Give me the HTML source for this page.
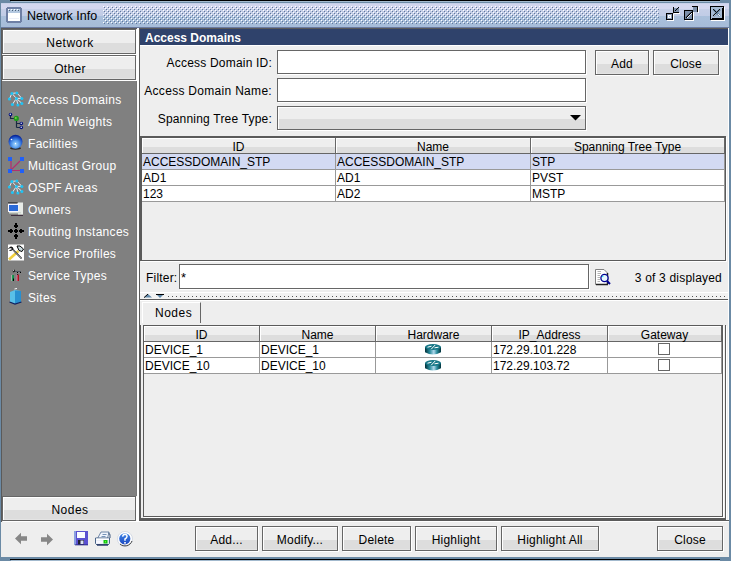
<!DOCTYPE html>
<html><head><meta charset="utf-8">
<style>
*{margin:0;padding:0;box-sizing:border-box}
html,body{width:731px;height:561px;overflow:hidden}
body{position:relative;background:#6b8aa5;font-family:"Liberation Sans",sans-serif;font-size:12px;color:#000}
.a{position:absolute}
.btn{position:absolute;border:1px solid #666;box-shadow:1px 1px 0 #fff,inset 1px 1px 0 #fff;
 background:linear-gradient(#eee 0,#eee 13px,#ddd 13px,#ddd calc(100% - 1px),#e4e4e4 calc(100% - 1px));
 text-align:center;line-height:23px;padding-top:2px;white-space:nowrap;letter-spacing:0.2px}
.tf{position:absolute;border:1px solid #666;box-shadow:1px 1px 0 #fff;background:#fff}
.lbl{position:absolute;white-space:nowrap;letter-spacing:0.2px;line-height:14px}
.nav{position:absolute;left:28px;color:#fff;white-space:nowrap;letter-spacing:0.3px;line-height:14px}
.hc{position:absolute;top:0;height:16px;border-right:1px solid #666;box-shadow:inset 1px 1px 0 #fff;
 background:linear-gradient(#eee 0,#eee 9px,#ddd 9px,#ddd 100%);text-align:center;line-height:15px;padding-top:2px;white-space:nowrap}
.cell{position:absolute;height:16px;border-right:1px solid #999;border-bottom:1px solid #999;white-space:nowrap;line-height:15px;padding-left:1px;padding-top:1px;overflow:hidden}
</style></head><body>
<!-- top strip -->
<div class="a" style="left:10px;top:0;width:710px;height:1px;background:#000"></div>
<div class="a" style="left:11px;top:1px;width:709px;height:1px;background:#a3bace"></div>
<!-- title bar -->
<div class="a" style="left:1px;top:3px;width:728px;height:24px;background:linear-gradient(#bccbe4 0,#d3d7ef 1px,#d3d7ef 6px,#c6cfe8 6px,#c0cce6 13px,#aac0dc 13px,#a6bcd8 24px)"></div>
<div class="a" style="left:1px;top:27px;width:728px;height:1px;background:#6a7aa0"></div>
<!-- title icon -->
<svg class="a" style="left:6px;top:7px" width="16" height="16" viewBox="0 0 16 16" shape-rendering="crispEdges">
 <rect x="0" y="1" width="16" height="14" fill="#6e7fa4"/><rect x="1" y="0" width="14" height="16" fill="#6e7fa4"/>
 <rect x="2" y="2" width="12" height="4" fill="#b4c8e0"/>
 <rect x="2" y="2" width="1" height="1" fill="#fff"/><rect x="5" y="2" width="1" height="1" fill="#fff"/><rect x="8" y="2" width="1" height="1" fill="#fff"/><rect x="11" y="2" width="1" height="1" fill="#fff"/>
 <rect x="3" y="3" width="1" height="1" fill="#48607a"/><rect x="6" y="3" width="1" height="1" fill="#48607a"/><rect x="9" y="3" width="1" height="1" fill="#48607a"/><rect x="12" y="3" width="1" height="1" fill="#48607a"/>
 <rect x="2" y="6" width="12" height="8" fill="#fff"/><rect x="3" y="11" width="10" height="1" fill="#eef0f8"/>
</svg>
<div class="lbl" style="left:27px;top:9px;font-size:12.5px;letter-spacing:0">Network Info</div>
<!-- bumps -->
<svg class="a" style="left:103px;top:6px" width="556" height="18" shape-rendering="crispEdges">
 <defs><pattern id="bp" width="4" height="4" patternUnits="userSpaceOnUse">
  <rect x="0" y="0" width="1" height="1" fill="#fff"/><rect x="2" y="2" width="1" height="1" fill="#fff"/>
  <rect x="1" y="1" width="1" height="1" fill="#60789a"/><rect x="3" y="3" width="1" height="1" fill="#60789a"/>
 </pattern></defs>
 <rect width="556" height="18" fill="url(#bp)"/>
</svg>
<!-- window buttons -->
<svg class="a" style="left:664px;top:4px" width="64" height="20" shape-rendering="crispEdges">
 <!-- iconify -->
 <rect x="2" y="9" width="7" height="7" fill="#000"/><rect x="3" y="10" width="5" height="5" fill="#8a9cb8"/><rect x="4" y="11" width="3" height="3" fill="#fff"/><rect x="5" y="12" width="1" height="1" fill="#b0c0d8"/>
 <rect x="3" y="16" width="7" height="1" fill="#fff"/><rect x="9" y="10" width="1" height="7" fill="#fff"/>
 <rect x="9" y="3" width="1" height="6" fill="#000"/><rect x="9" y="8" width="6" height="1" fill="#000"/><rect x="10" y="4" width="5" height="4" fill="#7d90aa"/>
 <path d="M11 7 L15 3" stroke="#000" stroke-width="1" shape-rendering="auto"/>
 <rect x="10" y="9" width="6" height="1" fill="#fff"/>
 <!-- maximize -->
 <rect x="20" y="6" width="9" height="10" fill="#000"/><rect x="21" y="7" width="7" height="8" fill="#7d90aa"/>
 <path d="M22 14 L28 8" stroke="#000" stroke-width="1.2" shape-rendering="auto"/><path d="M23 14 L28 9" stroke="#e8eef8" stroke-width="1" shape-rendering="auto"/>
 <rect x="21" y="16" width="9" height="1" fill="#fff"/><rect x="29" y="7" width="1" height="10" fill="#fff"/>
 <rect x="28" y="2" width="6" height="1" fill="#000"/><rect x="33" y="2" width="1" height="6" fill="#000"/><rect x="29" y="3" width="4" height="5" fill="#7d90aa"/><rect x="34" y="3" width="1" height="6" fill="#fff"/>
 <!-- close -->
 <rect x="46" y="2" width="14" height="14" fill="#000"/><rect x="47" y="3" width="12" height="12" fill="#a8bcd4"/>
 <rect x="48" y="14" width="11" height="1" fill="#000"/><rect x="58" y="4" width="1" height="11" fill="#000"/>
 <path d="M49.5 5.5 L56 12 M56 5.5 L49.5 12" stroke="#6888a4" stroke-width="2.2" shape-rendering="auto"/>
 <path d="M49 5 L52.5 8.5 M56 5 L49 12" stroke="#101010" stroke-width="1" shape-rendering="auto"/>
 <path d="M51.5 10.5 L50.5 11.5 M54 10 L56 12" stroke="#fff" stroke-width="0.9" shape-rendering="auto"/>
 <rect x="47" y="16" width="14" height="1" fill="#fff"/><rect x="60" y="3" width="1" height="14" fill="#fff"/>
</svg>

<!-- content area background -->
<div class="a" style="left:1px;top:28px;width:728px;height:529px;background:#eee"></div>
<div class="a" style="left:1px;top:28px;width:728px;height:1px;background:#5a5a5a"></div>
<div class="a" style="left:1px;top:28px;width:1px;height:494px;background:#5a5a5a"></div>

<!-- LEFT PANEL -->
<div class="a" style="left:2px;top:81px;width:135px;height:415px;background:#808080"></div>
<div class="a" style="left:136px;top:81px;width:1px;height:415px;background:#777"></div>
<div class="a" style="left:137px;top:28px;width:2px;height:494px;background:#fff"></div>
<div class="btn" style="left:2px;top:29px;width:134px;height:25px;padding-left:2px;letter-spacing:0.5px">Network</div>
<div class="btn" style="left:2px;top:55px;width:134px;height:25px;padding-left:2px;letter-spacing:0.3px">Other</div>
<div class="btn" style="left:2px;top:496px;width:134px;height:25px;padding-left:2px;letter-spacing:0.5px">Nodes</div>

<div id="navlist">
<div class="nav" style="top:93px">Access Domains</div>
<div class="nav" style="top:115px">Admin Weights</div>
<div class="nav" style="top:137px">Facilities</div>
<div class="nav" style="top:159px">Multicast Group</div>
<div class="nav" style="top:181px">OSPF Areas</div>
<div class="nav" style="top:203px">Owners</div>
<div class="nav" style="top:225px">Routing Instances</div>
<div class="nav" style="top:247px">Service Profiles</div>
<div class="nav" style="top:269px">Service Types</div>
<div class="nav" style="top:291px">Sites</div>
</div>


<!-- RIGHT PANEL -->
<div class="a" style="left:139px;top:28px;width:1px;height:494px;background:#5a5a5a"></div>
<div class="a" style="left:728px;top:28px;width:1px;height:494px;background:#fff"></div>
<div class="a" style="left:140px;top:29px;width:588px;height:16px;background:#2f426b"></div>
<div class="a" style="left:140px;top:45px;width:588px;height:1px;background:#fff"></div>
<div class="lbl" style="left:145px;top:31px;color:#fff;font-weight:bold;letter-spacing:0">Access Domains</div>

<div class="lbl" style="right:459px;top:56px">Access Domain ID:</div>
<div class="lbl" style="right:459px;top:84px;letter-spacing:0.3px">Access Domain Name:</div>
<div class="lbl" style="right:459px;top:112px">Spanning Tree Type:</div>
<div class="tf" style="left:277px;top:50px;width:309px;height:24px"></div>
<div class="tf" style="left:277px;top:78px;width:309px;height:24px"></div>
<div class="btn" style="left:277px;top:106px;width:309px;height:24px;background:linear-gradient(#eee 0,#eee 12px,#ddd 12px,#ddd 100%)"></div>
<svg class="a" style="left:570px;top:115px" width="11" height="6"><path d="M0 0 H11 L5.5 5.5 Z" fill="#000"/></svg>
<div class="btn" style="left:595px;top:50px;width:54px;height:25px">Add</div>
<div class="btn" style="left:653px;top:50px;width:66px;height:25px">Close</div>

<!-- top table -->
<div class="a" id="t1" style="left:140px;top:136px;width:586px;height:125px;background:#eee;border-top:2px solid #5a5a5a;border-left:2px solid #5a5a5a;border-right:1px solid #5a5a5a;border-bottom:1px solid #5a5a5a;box-shadow:1px 1px 0 #fff">
 <div class="a" style="left:0;top:0;width:583px;height:16px">
  <div class="hc" style="left:0;width:194px;border-bottom:1px solid #666">ID</div>
  <div class="hc" style="left:194px;width:195px;border-bottom:1px solid #666">Name</div>
  <div class="hc" style="left:389px;width:194px;border-bottom:1px solid #666">Spanning Tree Type</div>
 </div>
 <div class="a" style="left:0;top:16px;width:583px;height:16px;background:#d3daf3"></div>
 <div class="a" style="left:0;top:32px;width:583px;height:32px;background:#fff"></div>
 <div class="cell" style="left:0;top:16px;width:194px">ACCESSDOMAIN_STP</div>
 <div class="cell" style="left:194px;top:16px;width:195px">ACCESSDOMAIN_STP</div>
 <div class="cell" style="left:389px;top:16px;width:194px">STP</div>
 <div class="cell" style="left:0;top:32px;width:194px">AD1</div>
 <div class="cell" style="left:194px;top:32px;width:195px">AD1</div>
 <div class="cell" style="left:389px;top:32px;width:194px">PVST</div>
 <div class="cell" style="left:0;top:48px;width:194px">123</div>
 <div class="cell" style="left:194px;top:48px;width:195px">AD2</div>
 <div class="cell" style="left:389px;top:48px;width:194px">MSTP</div>
</div>

<!-- filter -->
<div class="lbl" style="left:146px;top:271px">Filter:</div>
<div class="tf" style="left:179px;top:264px;width:410px;height:25px"></div>
<div class="lbl" style="left:181px;top:271px;font-size:13px">*</div>

<div class="lbl" style="right:9px;top:271px">3 of 3 displayed</div>

<!-- split divider -->
<div class="a" style="left:140px;top:292px;width:588px;height:1px;background:#fff"></div>
<div class="a" style="left:140px;top:293px;width:588px;height:6px;background:#f2f2f2"></div>
<div class="a" style="left:140px;top:299px;width:588px;height:1px;background:#5a5a5a"></div>
<div class="a" style="left:140px;top:300px;width:588px;height:1px;background:#fff"></div>
<svg class="a" style="left:168px;top:296px" width="560" height="1" shape-rendering="crispEdges">
 <defs><pattern id="dt" width="4" height="1" patternUnits="userSpaceOnUse"><rect width="1" height="1" fill="#555"/></pattern></defs>
 <rect width="560" height="1" fill="url(#dt)"/>
</svg>
<svg class="a" style="left:144px;top:294px" width="20" height="4" shape-rendering="crispEdges">
 <path d="M0 3.6 L4 0 L8 3.6 Z" fill="#5f87a8" shape-rendering="auto"/><path d="M0 3.6 L4 0" stroke="#000" stroke-width="1" shape-rendering="auto"/>
 <path d="M12 0 H20 L16 4 Z" fill="#5f87a8" shape-rendering="auto"/><rect x="12" y="0" width="8" height="1" fill="#000"/>
</svg>

<!-- tabs -->
<div class="a" style="left:142px;top:302px;width:59px;height:21px;border-top:1px solid #fff;border-left:1px solid #fff;border-right:1px solid #666"></div>
<div class="lbl" style="left:155px;top:306px;letter-spacing:0.5px">Nodes</div>
<div class="a" style="left:140px;top:325px;width:586px;height:195px;border-bottom:2px solid #5a5a5a;border-left:1px solid #5a5a5a;border-right:1px solid #5a5a5a;box-shadow:1px 1px 0 #fff"></div>

<!-- nodes table -->
<div class="a" id="t2" style="left:143px;top:325px;width:580px;height:192px;border:1px solid #5a5a5a;box-shadow:1px 1px 0 #fff">
 <div class="a" style="left:0;top:0;width:578px;height:16px">
  <div class="hc" style="left:0;width:116px;border-bottom:1px solid #666">ID</div>
  <div class="hc" style="left:116px;width:116px;border-bottom:1px solid #666">Name</div>
  <div class="hc" style="left:232px;width:116px;border-bottom:1px solid #666">Hardware</div>
  <div class="hc" style="left:348px;width:116px;border-bottom:1px solid #666">IP_Address</div>
  <div class="hc" style="left:464px;width:114px;border-bottom:1px solid #666">Gateway</div>
 </div>
 <div class="a" style="left:0;top:16px;width:578px;height:32px;background:#fff"></div>
 <div class="cell" style="left:0;top:16px;width:116px">DEVICE_1</div>
 <div class="cell" style="left:116px;top:16px;width:116px">DEVICE_1</div>
 <div class="cell" style="left:232px;top:16px;width:116px"></div>
 <div class="cell" style="left:348px;top:16px;width:116px">172.29.101.228</div>
 <div class="cell" style="left:464px;top:16px;width:114px"></div>
 <div class="cell" style="left:0;top:32px;width:116px">DEVICE_10</div>
 <div class="cell" style="left:116px;top:32px;width:116px">DEVICE_10</div>
 <div class="cell" style="left:232px;top:32px;width:116px"></div>
 <div class="cell" style="left:348px;top:32px;width:116px">172.29.103.72</div>
 <div class="cell" style="left:464px;top:32px;width:114px"></div>
</div>

<div class="a" style="left:658px;top:343px;width:12px;height:12px;border:1px solid #666;box-shadow:1px 1px 0 #fff"></div>
<div class="a" style="left:658px;top:359px;width:12px;height:12px;border:1px solid #666;box-shadow:1px 1px 0 #fff"></div>

<!-- bottom toolbar -->
<div class="a" style="left:139px;top:520px;width:590px;height:1px;background:#5a5a5a"></div>
<div class="a" style="left:139px;top:521px;width:590px;height:1px;background:#fff"></div>

<div class="btn" style="left:195px;top:526px;width:63px;height:25px">Add...</div>
<div class="btn" style="left:262px;top:526px;width:76px;height:25px">Modify...</div>
<div class="btn" style="left:342px;top:526px;width:69px;height:25px">Delete</div>
<div class="btn" style="left:415px;top:526px;width:82px;height:25px">Highlight</div>
<div class="btn" style="left:501px;top:526px;width:98px;height:25px">Highlight All</div>
<div class="btn" style="left:657px;top:526px;width:66px;height:25px">Close</div>

<svg class="a" style="left:0;top:0" width="731" height="561" viewBox="0 0 731 561">
<defs>
 <radialGradient id="glob" cx="0.5" cy="0.68" r="0.62"><stop offset="0" stop-color="#a8dcff"/><stop offset="0.5" stop-color="#4a90e8"/><stop offset="0.85" stop-color="#1848c0"/><stop offset="1" stop-color="#0a2898"/></radialGradient>
 <linearGradient id="rtr" x1="0" x2="1" y1="0" y2="0"><stop offset="0" stop-color="#00303a"/><stop offset="0.3" stop-color="#2a8c9c"/><stop offset="0.55" stop-color="#b0d8ec"/><stop offset="0.75" stop-color="#2a8c9c"/><stop offset="1" stop-color="#00303a"/></linearGradient>
 <linearGradient id="hlp" x1="0" x2="0" y1="0" y2="1"><stop offset="0" stop-color="#3f86e8"/><stop offset="1" stop-color="#1c48c0"/></linearGradient>
 <g id="net">
  <path d="M5.5 5 L10.5 4.5 M5.5 5 L3 10.5 M5.5 5 L10 10 M10.5 4.5 L15.5 10 M10 10 L15.5 10 M10 10 L6 16 M10 10 L11.5 16.5 M10 10 L15.5 15" stroke="#e4ecf4" stroke-width="1"/>
  <g fill="#1ec3f5"><circle cx="5.5" cy="5" r="1.5"/><circle cx="10.5" cy="4.5" r="1.5"/><circle cx="3" cy="10.5" r="1.5"/><circle cx="10" cy="10" r="1.5"/><circle cx="15.5" cy="10" r="1.5"/><circle cx="6" cy="16" r="1.5"/><circle cx="11.5" cy="16.5" r="1.5"/><circle cx="15.5" cy="15" r="1.5"/></g>
 </g>
</defs>
<!-- nav icons -->
<use href="#net" x="6.4" y="88.4"/>
<g transform="translate(6,110)">
 <path d="M4.5 4.5 V8.5 H10 M10.5 10 V17.5 M10.5 13.5 H15.3 M10.5 17.5 H15.3" stroke="#1a2a40" stroke-width="1.2" fill="none"/>
 <circle cx="4.5" cy="4.5" r="1.8" fill="#00107a"/><circle cx="4.3" cy="4.3" r="0.7" fill="#fff"/>
 <circle cx="10.3" cy="8.4" r="2.6" fill="#1e9a1e"/><circle cx="9.8" cy="7.9" r="1" fill="#7ad040"/>
 <circle cx="15.3" cy="13.5" r="1.8" fill="#00107a"/><circle cx="15.2" cy="13.3" r="0.7" fill="#fff"/>
 <circle cx="15.3" cy="17.5" r="1.8" fill="#00107a"/><circle cx="15.2" cy="17.3" r="0.7" fill="#fff"/>
</g>
<g transform="translate(6,132)">
 <ellipse cx="9.5" cy="16.3" rx="5.5" ry="1.4" fill="#101010" opacity="0.8"/>
 <circle cx="9.5" cy="9.8" r="7" fill="url(#glob)"/>
 <circle cx="5.5" cy="7.5" r="0.8" fill="#fff"/><circle cx="9.5" cy="11.5" r="0.7" fill="#fff"/>
</g>
<g transform="translate(6,154)">
 <path d="M5 7 V16 L14 7 M5 16.5 H14" stroke="#b03070" stroke-width="1.2" fill="none"/>
 <g fill="#2060f8"><rect x="2" y="3" width="4" height="4"/><rect x="14" y="3" width="4" height="4"/><rect x="2" y="15" width="4" height="4"/><rect x="14" y="15" width="4" height="4"/></g>
</g>
<use href="#net" x="6.4" y="176.4"/>
<g transform="translate(6,198)">
 <rect x="12" y="4.5" width="5" height="12" fill="#e8ece8"/>
 <rect x="2" y="5" width="10.5" height="9" fill="#f4f4ff"/>
 <rect x="2" y="4.5" width="9.5" height="1" fill="#101010"/>
 <rect x="3" y="7" width="9" height="6" fill="#2a6ad8"/>
 <rect x="3" y="14" width="12" height="1.5" fill="#d0d8d0"/>
 <rect x="5" y="17" width="12" height="1" fill="#403040"/>
</g>
<g transform="translate(6,220)" fill="#000" shape-rendering="crispEdges">
 <rect x="8" y="10" width="4" height="2"/><rect x="9" y="9" width="2" height="4"/>
 <rect x="3" y="10" width="4" height="2"/><rect x="4" y="9" width="2" height="4"/><rect x="2" y="10" width="1" height="2"/>
 <rect x="13" y="10" width="4" height="2"/><rect x="14" y="9" width="2" height="4"/><rect x="17" y="10" width="1" height="2"/>
 <rect x="8" y="5" width="4" height="2"/><rect x="9" y="4" width="2" height="4"/><rect x="9" y="3" width="2" height="1"/>
 <rect x="8" y="15" width="4" height="2"/><rect x="9" y="14" width="2" height="4"/><rect x="9" y="18" width="2" height="1"/>
</g>
<g transform="translate(6,242)">
 <rect x="2" y="2.5" width="16" height="16" fill="#fff"/>
 <path d="M3 17.5 L12.5 9" stroke="#f0d040" stroke-width="2.6"/>
 <path d="M4.5 5 L15.5 16.5" stroke="#202020" stroke-width="1.6"/>
 <path d="M5 5.5 L15 16" stroke="#dde4f0" stroke-width="0.6"/>
 <path d="M2.5 6.5 L5 5 L7 6 L6 8 L3.5 8.5" stroke="#000" stroke-width="1" fill="none"/>
 <path d="M11 4 L14 4 L17.5 7 L16 9.5 L13 8.5 Z" fill="#c8d8dc" stroke="#000" stroke-width="1"/>
</g>
<g transform="translate(6,264)">
 <path d="M6 6.5 L8.5 5.5 L9.5 7.5 L7 8.5 Z" fill="#202020"/><path d="M6.5 7 L8 6" stroke="#fff" stroke-width="0.8"/>
 <path d="M9 7.5 H15" stroke="#505860" stroke-width="1"/><rect x="11" y="8" width="1" height="1" fill="#000"/><rect x="14" y="8" width="1" height="1" fill="#000"/>
 <rect x="6" y="11" width="2" height="6" fill="#10904a"/><rect x="7" y="14.5" width="1" height="2.5" fill="#000"/><rect x="5.5" y="11" width="0.6" height="6" fill="#c8e0d0"/>
 <rect x="11" y="10.5" width="2" height="6.5" fill="#b01020"/><rect x="10.6" y="10.5" width="0.9" height="6.5" fill="#e080a0"/><rect x="11" y="10" width="1" height="1" fill="#202020"/>
</g>
<g transform="translate(6,286)">
 <path d="M4 6 L9 4 L15 5 V16 L9 18 L4 16 Z" fill="#58c0e8"/>
 <path d="M9 4.5 L15 5 V16 L9 18 Z" fill="#2890d0"/>
 <path d="M3.5 16 L9 18 L15.5 16" stroke="#102060" stroke-width="1.2" fill="none"/>
 <path d="M8.5 3 L11 2.5" stroke="#fff" stroke-width="1"/>
</g>
<!-- search icon -->
<g transform="translate(595,269)">
 <path d="M0.5 0.5 H9 L12.5 4 V15.5 H0.5 Z" fill="#fff" stroke="#808080" stroke-width="1"/>
 <path d="M1 15.5 H13 M12.5 4 V15" stroke="#202020" stroke-width="1.5"/>
 <path d="M2.5 2.5 H6 M2.5 4.5 H6 M2.5 6.5 H5 M2.5 8.5 H5 M2.5 10.5 H5 M2.5 12.5 H5" stroke="#a0a0a0" stroke-width="0.8"/>
 <circle cx="9.5" cy="9" r="3.6" fill="#e8f8ff" stroke="#000090" stroke-width="1.3"/>
 <path d="M7.5 8 L8 7" stroke="#00e0ff" stroke-width="1.2"/>
 <path d="M12 12 L15 15" stroke="#000090" stroke-width="2"/>
</g>
<!-- routers -->
<g id="rt" transform="translate(425,344)">
 <path d="M0 3 V8.2 Q8 12.8 16 8.2 V3 Z" fill="url(#rtr)"/>
 <ellipse cx="8" cy="3" rx="8" ry="3" fill="#187888"/>
 <path d="M2.5 3.2 L6.5 2.2 M9.5 3.8 L13.5 3.2 M6.2 5.2 L10.2 1" stroke="#fff" stroke-width="1"/>
</g>
<use href="#rt" x="0" y="16"/>
<!-- toolbar -->
<path d="M15 538.5 L21 532.8 V536.3 H27 V540.8 H21 V544.2 Z" fill="#878787"/>
<path d="M53 539.5 L47 533.8 V537.3 H41 V541.8 H47 V545.2 Z" fill="#878787"/>
<g transform="translate(74,531)">
 <rect x="0" y="0" width="14" height="14" fill="#5a50d0"/>
 <rect x="0" y="0" width="2" height="14" fill="#8aa0e0"/>
 <rect x="3" y="1" width="8" height="6" fill="#fafcff"/>
 <rect x="4" y="9" width="6" height="4.5" fill="#202030"/><rect x="6.5" y="9.5" width="3" height="3.5" fill="#d8e0f8"/>
 <rect x="1" y="13.5" width="13" height="0.8" fill="#20207a"/>
</g>
<g transform="translate(95,531)">
 <path d="M2.5 7.5 L6 1 H14 L12.5 7.5 Z" fill="#f0f4fc" stroke="#7088a8" stroke-width="1"/>
 <path d="M13.5 1.5 L15 4 V7" stroke="#5a7090" stroke-width="1.2" fill="none"/>
 <path d="M7.5 3.5 H11.5 M6.5 5.5 H10.5" stroke="#6888b0" stroke-width="0.9"/>
 <path d="M0.5 7 H14.5 V12.5 L13 14 H2 L0.5 12.5 Z" fill="#dfe6f2" stroke="#4a6488" stroke-width="1"/>
 <rect x="1" y="7.5" width="13" height="1.5" fill="#fff"/>
 <rect x="1" y="9.5" width="8" height="3" fill="#f8f8ff"/>
 <rect x="8.5" y="9" width="4" height="3.5" fill="#10c810"/><rect x="10" y="10.3" width="1" height="1" fill="#a0ff40"/>
 <rect x="2" y="13.2" width="11" height="1.3" fill="#1a2a5a"/>
</g>
<g transform="translate(117,531)">
 <circle cx="8" cy="8" r="7.5" fill="#fff" stroke="#c0c8d8" stroke-width="0.6"/>
 <path d="M3 13 A7.5 7.5 0 0 0 15 10" stroke="#404040" stroke-width="1" fill="none"/>
 <circle cx="7.8" cy="7.8" r="5.6" fill="url(#hlp)"/>
 <path d="M5.6 5.6 Q6 3.3 8 3.3 Q10.2 3.5 10 5.5 Q9.8 7 8 8 V9.8" stroke="#fff" stroke-width="1.5" fill="none"/>
 <rect x="7.2" y="11" width="1.6" height="1.6" fill="#fff"/>
</g>
</svg>

<!-- bottom edge -->
<div class="a" style="left:0;top:557px;width:731px;height:4px;background:#6b8aa5"></div>
<div class="a" style="left:10px;top:559px;width:710px;height:1px;background:#000"></div>
<div class="a" style="left:11px;top:560px;width:709px;height:1px;background:#a3bace"></div>
</body></html>
